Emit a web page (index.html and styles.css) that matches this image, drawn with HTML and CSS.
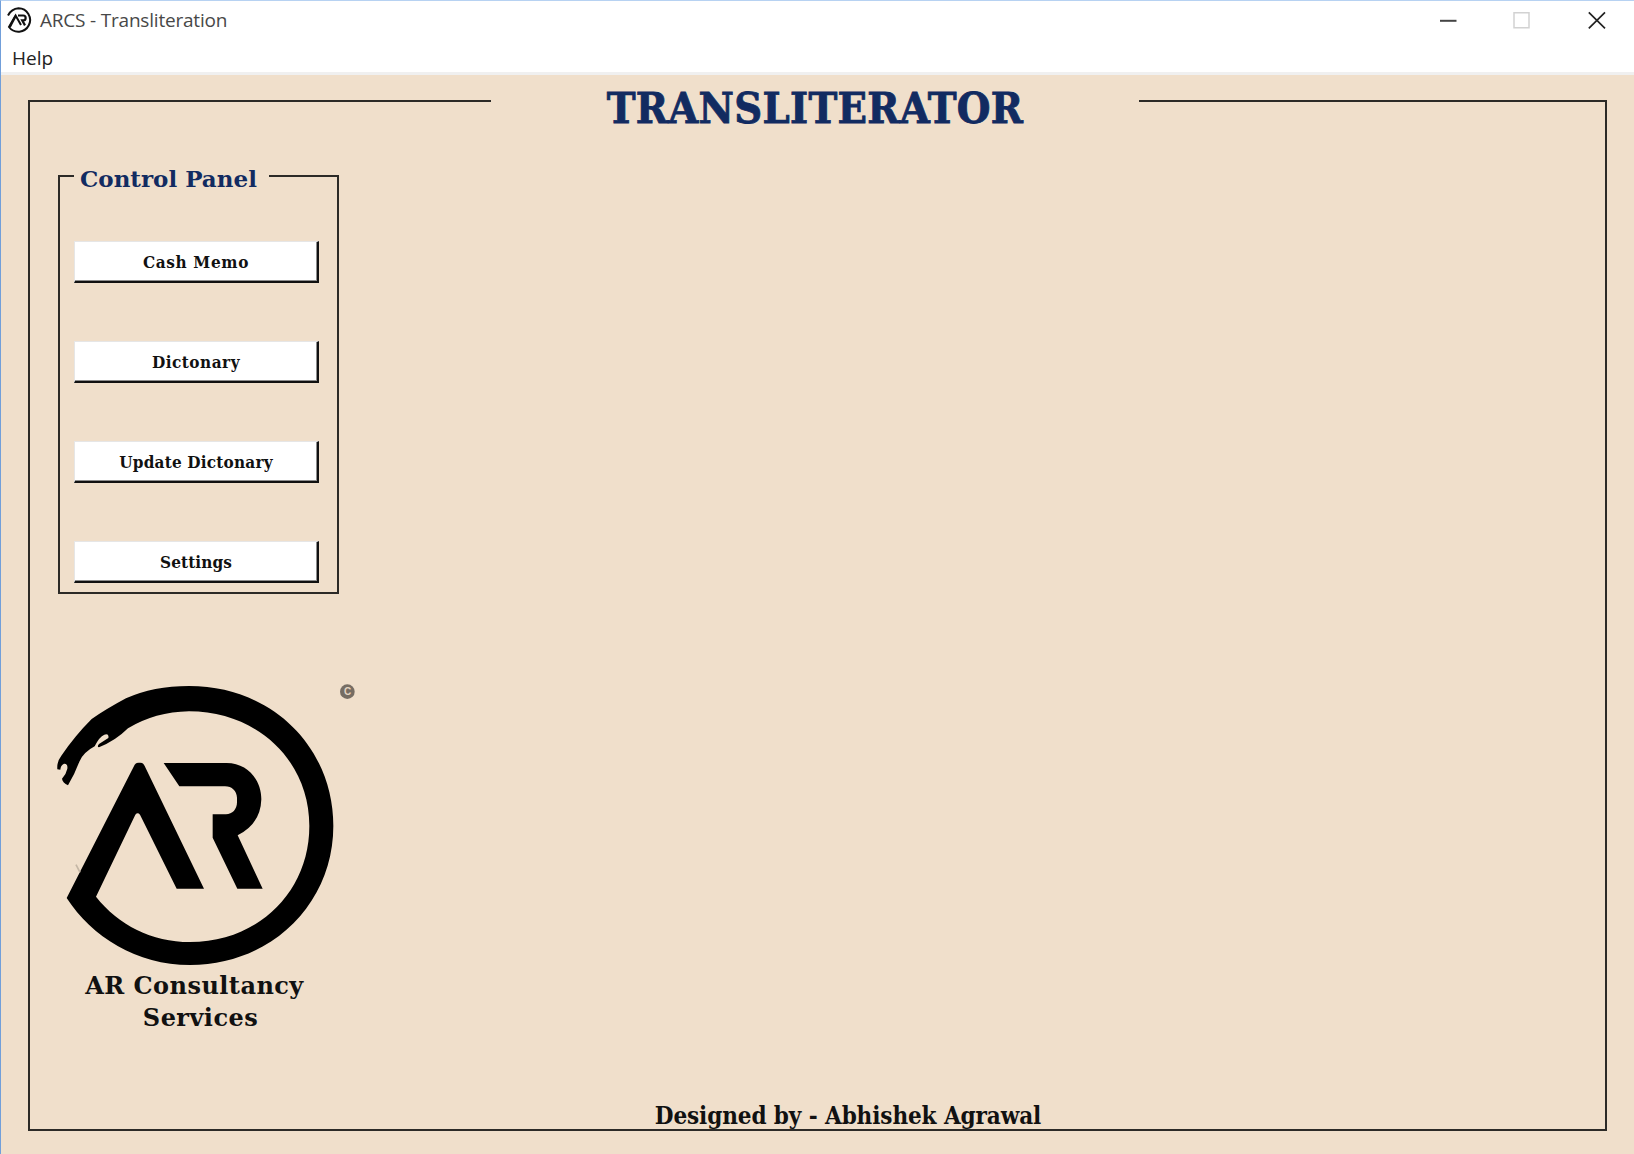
FILE: index.html
```html
<!DOCTYPE html>
<html lang="en">
<head>
<meta charset="utf-8">
<title>ARCS - Transliteration</title>
<link rel="stylesheet" href="styles.css">
</head>
<body>
<div class="window">
  <header class="titlebar">
    <svg class="app-icon" viewBox="0 0 26 26" fill="none" stroke="#111">
      <path d="M2 8.500Q5.500 1.800 12.500 1.300A11.700 11.700 0 1 1 3 20L9.600 8.500 15 18" stroke-width="2"/>
      <path d="M12 8.500h5.200a2.300 2.300 0 0 1 0 4.900h-1l2.800 5" stroke-width="2.200"/>
      <path d="M3.800 20 9.600 9" stroke-width="2.300"/>
    </svg>
    <span class="window-title">ARCS - Transliteration</span>
    <svg class="controls" viewBox="0 0 170 20">
      <path d="M2 10.800h16.500" stroke="#444" stroke-width="2"/>
      <path d="M76 2.800h15v15h-15z" fill="none" stroke="#d2d2d2" stroke-width="1.500"/>
      <path d="M150.800 2.300 167 18.300M167 2.300 150.800 18.300" stroke="#222" stroke-width="1.700"/>
    </svg>
  </header>
  <nav class="menubar"><span class="menu-item">Help</span></nav>
  <main class="client">
    <fieldset class="frame">
      <legend class="frame-legend"><h1 class="title">TRANSLITERATOR</h1></legend>
      <div class="sidebar">
        <fieldset class="panel">
          <legend class="panel-legend"><span class="panel-title">Control Panel</span></legend>
          <div class="buttons">
            <button class="btn btn-cash">Cash Memo</button>
            <button class="btn btn-dictionary">Dictonary</button>
            <button class="btn btn-update">Update Dictonary</button>
            <button class="btn">Settings</button>
          </div>
        </fieldset>
        <svg class="logo" viewBox="0 0 990 930">
          <path d="M52 298Q50 275 64 257Q105 197 155 147Q200 116 258 85Q340 48 447 48C700 48 880 235 880 468C880 700 695 885 450 885C290 885 155 800 80 684L284 284Q287 277 299 278Q310 277 314 288L492 656H410L300 434Q293 426 286 434L168 680C235 765 335 816 450 816C655 816 808 665 808 468C808 270 650 124 447 124Q345 126 264 175Q227 212 177 232Q170 230 177 222L205 204Q208 190 193 194Q178 200 164 229Q130 247 118 275Q103 315 84 346Q68 338 66 326Q78 314 82 296Q84 280 72 281Q62 285 61 299Z"/>
          <path d="M371 279H560C623 279 664 330 664 388Q662 461 593 496L668 656H592L518 503V433H558C577 433 591 418 591 397V383C590 363 576 349 555 349H418Z"/>
          <path d="M108 584 120 607" stroke="#c4b6a5" stroke-width="5"/>
          <circle cx="922" cy="65" r="22" fill="#766d63"/>
          <text class="copyright" x="923" y="76" text-anchor="middle">C</text>
        </svg>
        <div class="company">
          <span class="company-name">AR Consultancy</span>
          <span class="company-kind">Services</span>
        </div>
      </div>
      <footer class="credit">Designed by - Abhishek Agrawal</footer>
    </fieldset>
  </main>
</div>
</body>
</html>
```
FILE: styles.css
```css
* { box-sizing: border-box; }
body { margin: 0; }
.window {
  width: 1634px; height: 1154px; overflow: hidden;
  display: flex; flex-direction: column;
  background: #f0dfcb;
  border-top: 1px solid #b7d2f2; border-left: 1px solid #719fda;
  font-family: "DejaVu Serif Condensed", "DejaVu Serif", serif;
  font-stretch: condensed; font-weight: bold; color: #111;
}
.titlebar, .menubar {
  background: #fff; display: flex; align-items: center;
  font-family: "Open Sans", "Noto Sans", sans-serif;
  font-weight: normal; font-stretch: normal; font-size: 19px;
}
.titlebar { height: 38px; padding: 0 26px 0 5px; }
.app-icon { width: 26px; height: 26px; }
.window-title { margin-left: 8px; padding-bottom: 1px; color: #484848; letter-spacing: -0.2px; }
.controls { width: 170px; height: 20px; margin-left: auto; }
.menubar { height: 36px; padding: 4px 0 0 11px; color: #222; border-bottom: 3px solid #f0f0f0; }
.client { padding: 5px 27px 0; }

.frame {
  margin: 0; padding: 0; width: 1579px; height: 1051px;
  border: 2px solid #2c2a27; display: flex; flex-direction: column;
}
.frame-legend {
  width: 648px; height: 42px; padding: 0; margin-left: 461px;
  display: flex; justify-content: center; align-items: center;
}
.title {
  margin: 13px 0 0; font-size: 43px; line-height: 42px; letter-spacing: 0.3px;
  color: #122b61; -webkit-text-stroke: 0.8px #122b61;
}

.sidebar { padding: 41px 0 0 28px; }
.panel {
  width: 281px; height: 431px; margin: 0; padding: 0 0 0 14px;
  border: 2px solid #2c2a27;
}
.panel-legend { width: 195px; height: 26px; padding: 0 0 0 6px; }
.panel-title {
  display: block; padding-top: 3px; line-height: 26px; white-space: nowrap;
  font-family: "DejaVu Serif", serif; font-stretch: normal; font-size: 23px; color: #122b61;
}
.buttons { padding-top: 52px; display: flex; flex-direction: column; gap: 58px; }
.btn {
  width: 245px; height: 42px; padding: 0; color: #111; background: #fff;
  border: 1px solid #e6e6e6; border-right: 2px solid #111; border-bottom: 2px solid #111;
  box-shadow: inset -1px -1px #8d8d8d;
  font: inherit; font-size: 17px; letter-spacing: 0.1px;
}
.btn-cash { letter-spacing: 0.65px; }
.btn-dictionary { letter-spacing: 0.5px; }
.btn-update { letter-spacing: 0.2px; }

.logo { display: block; width: 330px; height: 310px; margin: 76px 0 0 -18px; }
.copyright { font: bold 30px "Liberation Sans", sans-serif; fill: #e4d4c1; }
.company {
  width: 273px; margin-top: -10px;
  display: flex; flex-direction: column; align-items: center;
  font-family: "DejaVu Serif", serif; font-stretch: normal;
  font-size: 24px; line-height: 32px; letter-spacing: 0.45px; white-space: nowrap;
}
.company-kind { padding-left: 12px; }
.credit {
  margin-top: 67px; padding-left: 61px; text-align: center;
  font-size: 24px; line-height: 30px; letter-spacing: -0.1px;
}
```
